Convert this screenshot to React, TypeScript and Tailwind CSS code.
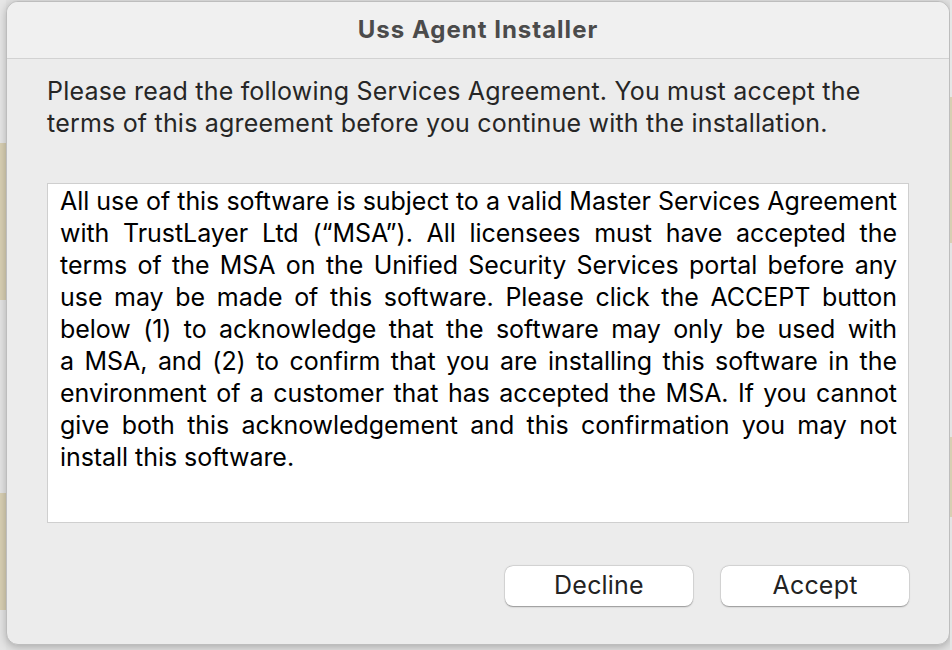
import React from 'react'

const agreement = [
  'All use of this software is subject to a valid Master Services Agreement',
  'with TrustLayer Ltd (\u201cMSA\u201d). All licensees must have accepted the',
  'terms of the MSA on the Unified Security Services portal before any',
  'use may be made of this software. Please click the ACCEPT button',
  'below (1) to acknowledge that the software may only be used with',
  'a MSA, and (2) to confirm that you are installing this software in the',
  'environment of a customer that has accepted the MSA. If you cannot',
  'give both this acknowledgement and this confirmation you may not',
]

const font = { fontFamily: 'Inter, "Noto Sans", sans-serif' }

function DialogButton({ label }: { label: string }) {
  return (
    <button className="h-[40px] w-[188px] rounded-[8px] bg-white text-[25px] tracking-[0.2px] text-[#222] shadow-[0_0.5px_1.5px_rgba(0,0,0,0.35),0_0_0_0.5px_rgba(0,0,0,0.08)]">
      {label}
    </button>
  )
}

export default function App() {
  return (
    <div className="flex h-[650px] w-[952px] bg-[#e2e2e2]" style={font}>
      {/* backdrop peeking out on the left */}
      <div className="flex w-[6px] flex-col">
        <div className="h-[143px] bg-[#e6e6e6]" />
        <div className="h-[157px] bg-[#d8cfb3]" />
        <div className="h-[193px] bg-[#e4e4e4]" />
        <div className="h-[117px] bg-[#d8cfb3]" />
        <div className="flex-1 bg-[#e4e4e4]" />
      </div>

      <div className="mt-[1px] flex h-[644px] w-[944px] flex-col overflow-hidden rounded-[12px] border border-[#bdbdbd] bg-[#ececec] shadow-[0_2px_8px_rgba(0,0,0,0.25)]">
        <div className="flex h-[57px] shrink-0 items-center justify-center border-b border-[#d2d2d2] bg-[#f0f0f0]">
          <span className="text-[24px] font-bold tracking-[1px] text-[#4b4b4b]">Uss Agent Installer</span>
        </div>

        <div className="flex flex-1 flex-col px-[40px] pt-[16px]">
          <div className="text-[25px] leading-[32px] tracking-[0.2px] text-[#262626]">
            <div className="whitespace-nowrap">
              Please read the following Services Agreement. You must accept the
            </div>
            <div className="whitespace-nowrap">
              terms of this agreement before you continue with the installation.
            </div>
          </div>

          <div className="mt-[44px] h-[340px] border border-[#cfcfcf] bg-white pl-[12px] pr-[11px] pt-[1px] text-[25px] leading-[32px] tracking-[-0.05px] text-black">
            {agreement.map((line) => (
              <div key={line} className="whitespace-nowrap text-justify [text-align-last:justify]">
                {line}
              </div>
            ))}
            <div className="whitespace-nowrap">install this software.</div>
          </div>

          <div className="mt-[43px] flex justify-end gap-[28px]">
            <DialogButton label="Decline" />
            <DialogButton label="Accept" />
          </div>
        </div>
      </div>

      <div className="flex w-[2px] flex-col">
        <div className="h-[97px] bg-[#e6e6e6]" />
        <div className="h-[146px] bg-[#d8cfb3]" />
        <div className="h-[194px] bg-[#e4e4e4]" />
        <div className="h-[80px] bg-[#d8cfb3]" />
        <div className="flex-1 bg-[#e4e4e4]" />
      </div>
    </div>
  )
}
